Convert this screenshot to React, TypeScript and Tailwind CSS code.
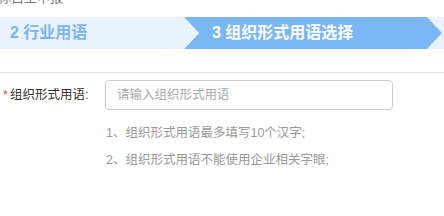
import React from 'react';

const FONT = '"Liberation Sans", "Noto Sans CJK SC", sans-serif';

const App = () => {
  return (
    <div
      className="w-[444px] h-[216px] overflow-hidden bg-white"
      style={{ fontFamily: FONT }}
    >
      {/* 上方标题（被截断） */}
      <div className="-mt-[11px] h-[18px] leading-[18px] text-[13px] text-[#777] -ml-[2px] whitespace-nowrap">
        称自主申报
      </div>

      {/* 步骤条 */}
      <div className="mt-[10px] flex h-[32px] bg-[#e8f3fe]">
        <div className="w-[184px] shrink-0 flex items-center pl-[10px] text-[16px] font-bold text-[#7cb5f0] whitespace-nowrap">
          2 行业用语
        </div>
        <div className="relative w-[243px] shrink-0 bg-[#7ab7f4] flex items-center pl-[28px] text-[16px] font-bold text-white whitespace-nowrap">
          {/* 左侧浅色箭头 */}
          <span className="absolute left-0 top-0 w-0 h-0 border-y-[16px] border-y-transparent border-l-[15px] border-l-white" />
          <span className="absolute left-0 top-0 w-0 h-0 border-y-[16px] border-y-transparent border-l-[13px] border-l-[#e8f3fe]" />
          3 组织形式用语选择
          {/* 右侧蓝色箭头 */}
          <span className="absolute -right-[15px] top-0 w-0 h-0 border-y-[16px] border-y-transparent border-l-[15px] border-l-[#7ab7f4]" />
        </div>
      </div>

      <div className="mt-[23px] h-px bg-[#dedede]" />

      {/* 表单行 */}
      <div className="mt-[7px] flex items-center h-[30px]">
        <div className="w-[105px] shrink-0 flex items-center text-[12.5px] text-[#333] whitespace-nowrap">
          <span className="text-[#e4393c] w-[9px] pl-[3px] text-[12px]">*</span>
          <span className="ml-[1px]">组织形式用语:</span>
        </div>
        <input
          type="text"
          placeholder="请输入组织形式用语"
          className="w-[288px] h-[30px] rounded-[4px] border border-[#cccccc] px-[11px] text-[12.5px] text-[#333] placeholder:text-[#aaa] outline-none"
          style={{ fontFamily: FONT }}
        />
      </div>

      {/* 提示 */}
      <div className="mt-[10px] pl-[106px] text-[12.5px] leading-[27px] text-[#999] whitespace-nowrap">
        <p>1、组织形式用语最多填写10个汉字;</p>
        <p>2、组织形式用语不能使用企业相关字眼;</p>
      </div>
    </div>
  );
};

export default App;
